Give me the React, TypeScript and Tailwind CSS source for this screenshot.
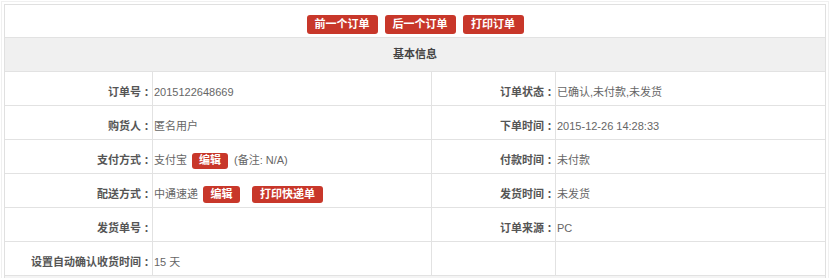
import React from "react";

const font = { fontFamily: '"Liberation Sans", "Noto Sans CJK SC", sans-serif' };
const colonFont = { fontFamily: '"Noto Sans CJK TC", sans-serif' };

function Btn({ children, w }: { children: React.ReactNode; w: string }) {
  return (
    <span
      className={`inline-flex items-center justify-center h-[19px] ${w} rounded-[3px] bg-[#c8372a] text-white text-[11px] font-bold`}
    >
      {children}
    </span>
  );
}

function SmallBtn({ children, w }: { children: React.ReactNode; w: string }) {
  return (
    <span
      className={`inline-flex items-center justify-center h-[16px] ${w} rounded-[3px] bg-[#c8372a] text-white text-[11px] font-bold`}
    >
      {children}
    </span>
  );
}

function Label({ children }: { children?: React.ReactNode }) {
  return (
    <div className="flex items-center justify-end pt-[8px] border-r border-[#e2e2e2] text-[11px] font-bold text-[#555] whitespace-nowrap">
      {children ? (
        <>
          {children}
          <span style={colonFont}>：</span>
        </>
      ) : null}
    </div>
  );
}

function Value({ children, last }: { children?: React.ReactNode; last?: boolean }) {
  return (
    <div
      className={`flex items-center pt-[8px] pl-[1px] text-[11px] text-[#666] whitespace-nowrap ${
        last ? "" : "border-r border-[#e2e2e2]"
      }`}
    >
      {children}
    </div>
  );
}

function Row({ children }: { children: React.ReactNode }) {
  return (
    <div className="grid grid-cols-[148px_279px_124px_1fr] h-[34px] border-t border-[#e2e2e2]">
      {children}
    </div>
  );
}

export default function App() {
  return (
    <div className="w-[830px] h-[278px] overflow-hidden bg-white p-[1px]" style={font}>
      <div className="border border-[#f0f0f0] p-[2px]">
        <div className="border border-[#e0e0e0] bg-white">
          <div className="h-[32px] flex items-end justify-center gap-[7px] pb-[3px]">
            <Btn w="w-[71px]">前一个订单</Btn>
            <Btn w="w-[71px]">后一个订单</Btn>
            <Btn w="w-[61px]">打印订单</Btn>
          </div>
          <div className="h-[34px] border-t border-[#e2e2e2] bg-[#f0f0f0] flex items-center justify-center text-[11px] font-bold text-[#444]">
            基本信息
          </div>
          <Row>
            <Label>订单号</Label>
            <Value>2015122648669</Value>
            <Label>订单状态</Label>
            <Value last>已确认,未付款,未发货</Value>
          </Row>
          <Row>
            <Label>购货人</Label>
            <Value>匿名用户</Value>
            <Label>下单时间</Label>
            <Value last>2015-12-26 14:28:33</Value>
          </Row>
          <Row>
            <Label>支付方式</Label>
            <Value>
              <span>支付宝</span>
              <span className="ml-[5px]">
                <SmallBtn w="w-[36px]">编辑</SmallBtn>
              </span>
              <span className="ml-[6px]">(备注: N/A)</span>
            </Value>
            <Label>付款时间</Label>
            <Value last>未付款</Value>
          </Row>
          <Row>
            <Label>配送方式</Label>
            <Value>
              <span>中通速递</span>
              <span className="ml-[5px]">
                <SmallBtn w="w-[37px] h-[17px]">编辑</SmallBtn>
              </span>
              <span className="ml-[12px]">
                <SmallBtn w="w-[71px] h-[17px]">打印快递单</SmallBtn>
              </span>
            </Value>
            <Label>发货时间</Label>
            <Value last>未发货</Value>
          </Row>
          <Row>
            <Label>发货单号</Label>
            <Value></Value>
            <Label>订单来源</Label>
            <Value last>PC</Value>
          </Row>
          <Row>
            <Label>设置自动确认收货时间</Label>
            <Value>15 天</Value>
            <Label />
            <Value last></Value>
          </Row>
          <div className="h-[34px] border-t border-[#e2e2e2] bg-[#f4f4f4]"></div>
        </div>
      </div>
    </div>
  );
}
